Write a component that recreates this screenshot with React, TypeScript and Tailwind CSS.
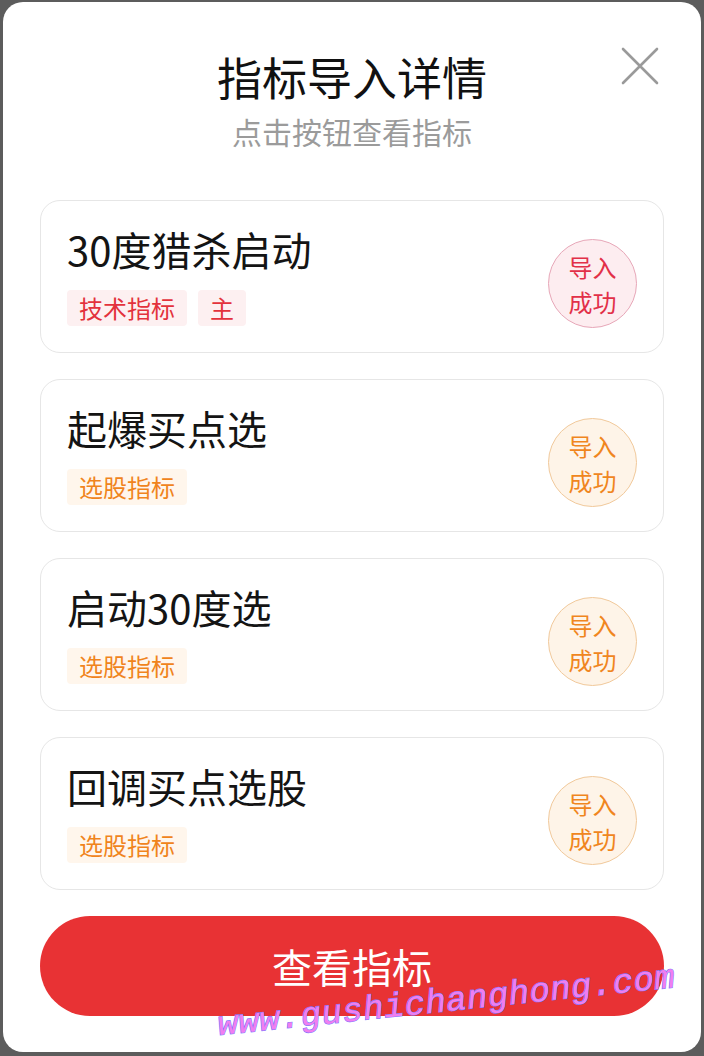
import React from 'react';

type Tag = { label: string };
type Item = { name: string; tags: Tag[]; tone: 'red' | 'orange' };

const items: Item[] = [
  { name: '30度猎杀启动', tags: [{ label: '技术指标' }, { label: '主' }], tone: 'red' },
  { name: '起爆买点选', tags: [{ label: '选股指标' }], tone: 'orange' },
  { name: '启动30度选', tags: [{ label: '选股指标' }], tone: 'orange' },
  { name: '回调买点选股', tags: [{ label: '选股指标' }], tone: 'orange' },
];

function CloseIcon() {
  return (
    <svg width="38" height="38" viewBox="0 0 38 38" fill="none">
      <path d="M2 2L36 36M36 2L2 36" stroke="#9a9a9a" strokeWidth="2.6" strokeLinecap="round" />
    </svg>
  );
}

function IndicatorCard({ item }: { item: Item }) {
  const red = item.tone === 'red';
  return (
    <div className="flex h-[153px] items-center justify-between rounded-[20px] border border-[#e6e6e6] bg-white pl-[26px] pr-[26px]">
      <div className="flex flex-col">
        <div className="-mt-[3px] text-[40px] leading-[48px] text-[#141414]">{item.name}</div>
        <div className="mt-[17px] flex gap-[11px]">
          {item.tags.map((t) => (
            <span
              key={t.label}
              className={
                red
                  ? 'h-[36px] rounded-[4px] bg-[#fdf0f1] px-[12px] text-[24px] leading-[36px] text-[#e3323c]'
                  : 'h-[36px] rounded-[4px] bg-[#fff6ec] px-[12px] text-[24px] leading-[36px] text-[#f0841c]'
              }
            >
              {t.label}
            </span>
          ))}
        </div>
      </div>
      <div
        className={
          red
            ? 'mt-[14px] flex h-[89px] w-[89px] flex-col items-center justify-center rounded-full border border-[#e7a7b8] bg-[#fdedf0] text-[24px] leading-[35px] text-[#e23048]'
            : 'mt-[14px] flex h-[89px] w-[89px] flex-col items-center justify-center rounded-full border border-[#f1c99b] bg-[#fef4e8] text-[24px] leading-[35px] text-[#f0861e]'
        }
      >
        <span>导入</span>
        <span>成功</span>
      </div>
    </div>
  );
}

export default function App() {
  return (
    <div
      className="relative h-[1056px] w-[704px] overflow-hidden bg-[#5c5c5c] pb-[4px] pl-[3px] pr-[3px] pt-[2px]"
      style={{ fontFamily: '"Noto Sans CJK SC", "Noto Sans", sans-serif' }}
    >
      <div className="relative flex h-[1050px] w-[698px] flex-col rounded-[20px] bg-white px-[37px] pt-[45px]">
        <button className="absolute right-[42px] top-[45px]">
          <CloseIcon />
        </button>
        <h1 className="text-center text-[45px] leading-[60px] text-[#111]">指标导入详情</h1>
        <p className="mt-[4px] text-center text-[30px] leading-[40px] text-[#9b9b9b]">点击按钮查看指标</p>

        <div className="mt-[49px] flex flex-col gap-[26px]">
          {items.map((it) => (
            <IndicatorCard key={it.name} item={it} />
          ))}
        </div>

        <button className="mt-[26px] h-[100px] w-full rounded-full bg-[#e83234] text-[40px] text-white">
          查看指标
        </button>
      </div>

      <span
        className="pointer-events-none absolute left-[220px] top-[1004px] origin-bottom-left -rotate-[6deg] whitespace-nowrap text-[34px] italic leading-[44px] tracking-[0.5px] text-[#f07ef0] [-webkit-text-stroke:1.2px_#7a78ff] [paint-order:stroke_fill]"
        style={{ fontFamily: '"Liberation Mono", monospace' }}
      >
        www.gushichanghong.com
      </span>
    </div>
  );
}
